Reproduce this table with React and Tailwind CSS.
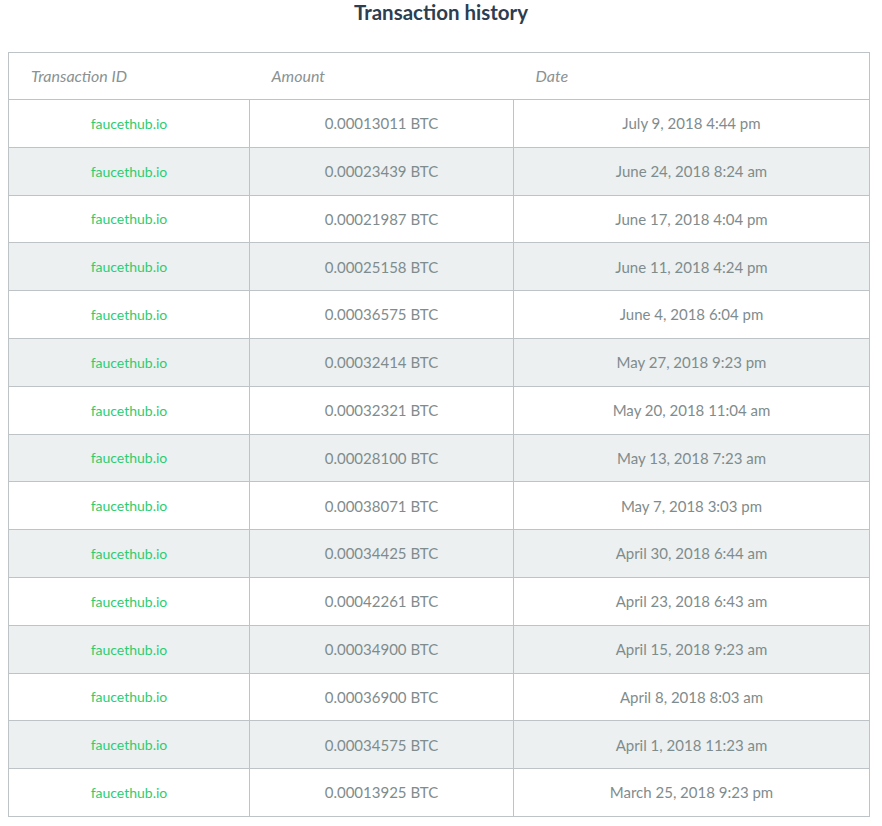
import React from "react";

const rows = [
  ["0.00013011 BTC", "July 9, 2018 4:44 pm"],
  ["0.00023439 BTC", "June 24, 2018 8:24 am"],
  ["0.00021987 BTC", "June 17, 2018 4:04 pm"],
  ["0.00025158 BTC", "June 11, 2018 4:24 pm"],
  ["0.00036575 BTC", "June 4, 2018 6:04 pm"],
  ["0.00032414 BTC", "May 27, 2018 9:23 pm"],
  ["0.00032321 BTC", "May 20, 2018 11:04 am"],
  ["0.00028100 BTC", "May 13, 2018 7:23 am"],
  ["0.00038071 BTC", "May 7, 2018 3:03 pm"],
  ["0.00034425 BTC", "April 30, 2018 6:44 am"],
  ["0.00042261 BTC", "April 23, 2018 6:43 am"],
  ["0.00034900 BTC", "April 15, 2018 9:23 am"],
  ["0.00036900 BTC", "April 8, 2018 8:03 am"],
  ["0.00034575 BTC", "April 1, 2018 11:23 am"],
  ["0.00013925 BTC", "March 25, 2018 9:23 pm"],
];

export default function App() {
  return (
    <div className="bg-white w-[882px] h-[826px] font-['Lato','Liberation_Sans',sans-serif]">
      <h2 className="text-center text-[20.5px] font-bold text-[#2c3e50] leading-[24px] h-[52px]">
        Transaction history
      </h2>
      <table className="ml-[8px] w-[862px] border-collapse border border-[#bdc3c7] table-fixed">
        <colgroup>
          <col className="w-[241px]" />
          <col className="w-[264px]" />
          <col />
        </colgroup>
        <thead>
          <tr className="h-[47px] border-b border-[#bdc3c7]">
            <th className="text-left italic font-normal text-[16px] text-[#8a9293] pl-[22px]">Transaction ID</th>
            <th className="text-left italic font-normal text-[16px] text-[#8a9293] pl-[22px]">Amount</th>
            <th className="text-left italic font-normal text-[16px] text-[#8a9293] pl-[22px]">Date</th>
          </tr>
        </thead>
        <tbody>
          {rows.map(([amt, date], i) => (
            <tr key={i} className={`h-[47.8px] border-b border-[#bdc3c7] ${i % 2 === 1 ? "bg-[#ecf0f1]" : "bg-white"}`}>
              <td className="text-center text-[14px] text-[#2ecc71] border-r border-[#bdc3c7]">faucethub.io</td>
              <td className="text-center text-[15px] text-[#7f8c8d] border-r border-[#bdc3c7]">{amt}</td>
              <td className="text-center text-[15px] text-[#7f8c8d]">{date}</td>
            </tr>
          ))}
        </tbody>
      </table>
    </div>
  );
}
